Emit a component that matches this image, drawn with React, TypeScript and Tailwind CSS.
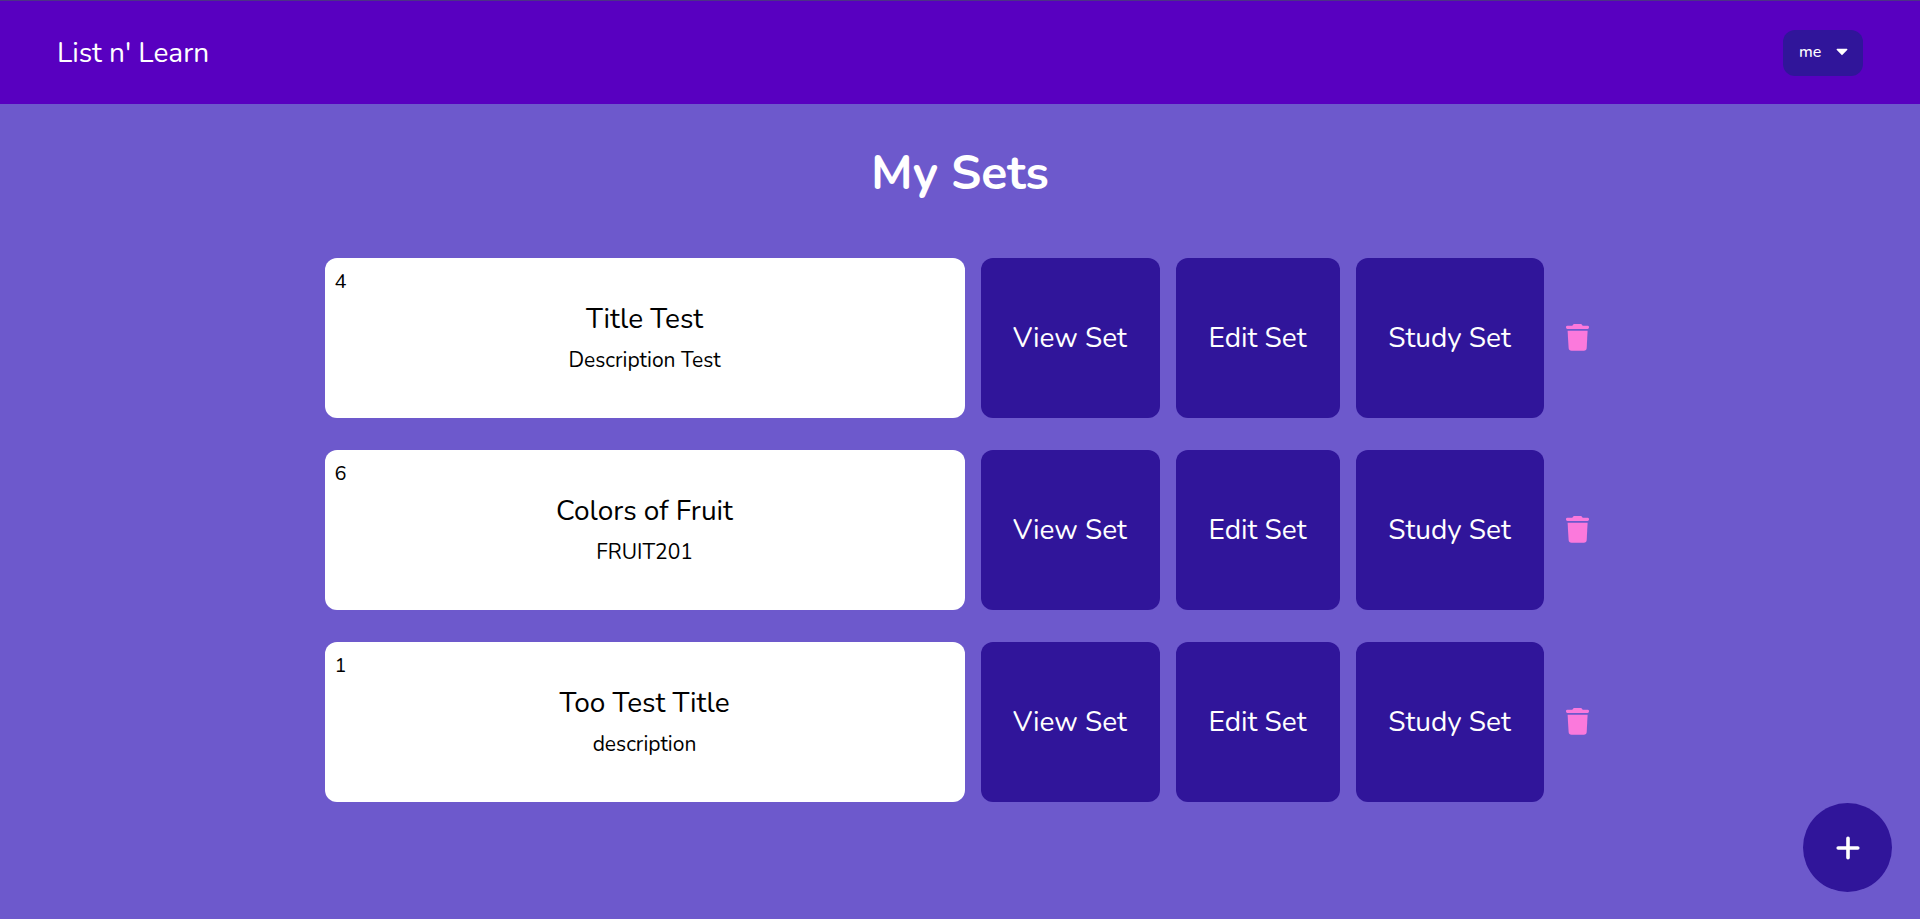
import { TiArrowSortedDown } from "react-icons/ti";

type StudySet = {
  id: number;
  count: number;
  title: string;
  description: string;
};

const studySets: StudySet[] = [
  { id: 1, count: 4, title: "Title Test", description: "Description Test" },
  { id: 2, count: 6, title: "Colors of Fruit", description: "FRUIT201" },
  { id: 3, count: 1, title: "Too Test Title", description: "description" },
];

const actions = [
  { label: "View Set", width: "w-[179px]" },
  { label: "Edit Set", width: "w-[164px]" },
  { label: "Study Set", width: "w-[188px]" },
];

function TrashIcon() {
  return (
    <svg viewBox="0 0 36 36" className="size-9" fill="currentColor" aria-hidden="true">
      <path d="M12.3 5.7 L13.2 4.4 Q13.5 4 14 4 H21 Q21.5 4 21.8 4.4 L22.7 5.7 H27.6 A1.4 1.4 0 0 1 29 7.1 V7.6 A1.4 1.4 0 0 1 27.6 9 H7.4 A1.4 1.4 0 0 1 6 7.6 V7.1 A1.4 1.4 0 0 1 7.4 5.7 Z" />
      <path d="M7.6 10.7 H27.6 L26.7 28 Q26.5 30.8 23.8 30.8 H11.5 Q8.8 30.8 8.6 28 Z" />
    </svg>
  );
}

function PlusIcon() {
  return (
    <svg
      viewBox="0 0 24 24"
      className="size-6"
      fill="none"
      stroke="currentColor"
      strokeWidth="3.6"
      strokeLinecap="round"
      aria-hidden="true"
    >
      <path d="M12 2.2 V21.8 M2.2 12 H21.8" />
    </svg>
  );
}

function Header() {
  return (
    <header className="flex h-26 items-center justify-between border-t border-[#4c3286] bg-[#5800c0] px-[57px]">
      <a href="#" className="text-[28px] leading-9">
        List n' Learn
      </a>
      <button
        type="button"
        className="flex h-[46px] w-20 items-center justify-between rounded-xl bg-[#30159a] pr-[11px] pb-px pl-4 text-base font-medium"
      >
        me
        <TiArrowSortedDown className="size-5" aria-hidden="true" />
      </button>
    </header>
  );
}

function SetRow({ set }: { set: StudySet }) {
  return (
    <li className="flex items-center gap-4">
      <article className="relative flex h-40 w-160 flex-col items-center justify-center gap-2 rounded-xl bg-white text-black">
        <span className="absolute top-2 left-[10px] text-xl leading-8">{set.count}</span>
        <h2 className="text-[28px] leading-9">{set.title}</h2>
        <p className="text-[21px] leading-[30px]">{set.description}</p>
      </article>
      {actions.map(({ label, width }) => (
        <button
          key={label}
          type="button"
          className={`h-40 rounded-xl bg-[#30159a] text-center text-[28px] leading-9 ${width}`}
        >
          {label}
        </button>
      ))}
      <button type="button" aria-label={`Delete ${set.title}`} className="text-[#fb79dc]">
        <TrashIcon />
      </button>
    </li>
  );
}

export default function App() {
  return (
    <div className="min-h-screen bg-[#6d59cc] font-[Nunito,Lato,sans-serif] text-white">
      <Header />
      <main className="flex flex-col items-center pt-[34px]">
        <h1 className="text-5xl leading-[70px] font-bold">My Sets</h1>
        <ul className="mt-[50px] flex flex-col gap-8">
          {studySets.map((set) => (
            <SetRow key={set.id} set={set} />
          ))}
        </ul>
      </main>
      <button
        type="button"
        aria-label="Create set"
        className="fixed right-7 bottom-[27px] flex size-[89px] items-center justify-center rounded-full bg-[#30159a]"
      >
        <PlusIcon />
      </button>
    </div>
  );
}
